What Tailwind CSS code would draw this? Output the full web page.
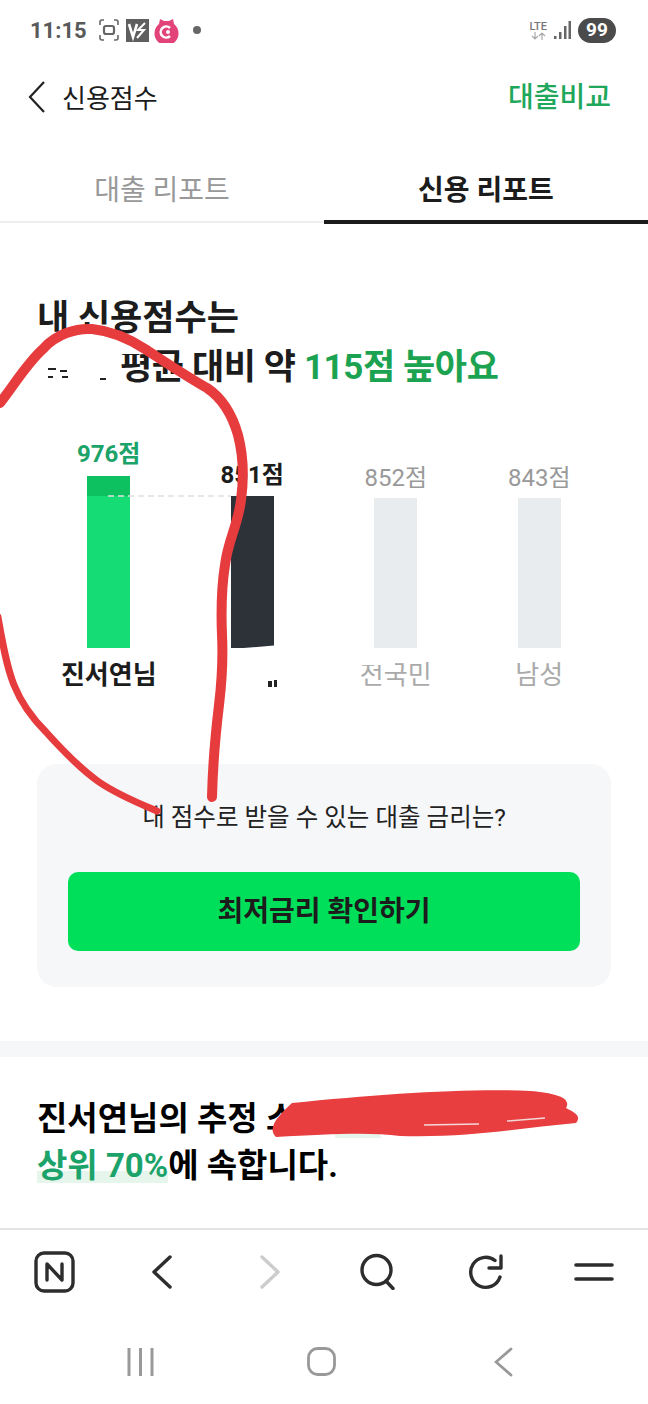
<!DOCTYPE html>
<html lang="ko">
<head>
<meta charset="utf-8">
<script src="https://cdn.jsdelivr.net/npm/@tailwindcss/browser@4"></script>
</head>
<body class="bg-white">
<div class="relative w-[648px] h-[1404px] overflow-hidden bg-white font-['Roboto','Noto_Sans_CJK_KR',sans-serif] text-[#1c1c1c]">

  <!-- status bar -->
  <div class="h-[60px] flex items-center pl-[30px] pr-[32px]">
    <span class="text-[22px] font-bold text-[#5a5a5a] w-[69px]">11:15</span>
    <svg width="20" height="22" viewBox="0 0 20 22" fill="none" stroke="#666" stroke-width="1.6"><path d="M1 6V3q0-2 2-2h2M15 1h2q2 0 2 2v3M1 16v3q0 2 2 2h2M15 21h2q2 0 2-2v-3"/><rect x="5" y="7" width="10" height="8" rx="2" stroke-width="2.2"/></svg>
    <svg class="ml-[7px]" width="23" height="23" viewBox="0 0 23 23"><rect width="23" height="23" fill="#5f5f5f"/><path d="M3 5l4 13 4-13" fill="none" stroke="#fff" stroke-width="2.600"/><path d="M19 4l-7 7h6l-7 8" fill="none" stroke="#fff" stroke-width="2"/></svg>
    <svg class="ml-[5px]" width="25" height="26" viewBox="0 0 25 26"><path d="M6 2l4 2h5l4-2 1 5a12 12 0 1 1-15 0z" fill="#e2447a"/><path d="M16 11a5.500 5.500 0 1 0 0 8" fill="none" stroke="#fff" stroke-width="2.600"/><circle cx="14" cy="15" r="2" fill="#fff"/></svg>
    <span class="ml-[14px] w-[8px] h-[8px] rounded-full bg-[#666]"></span>
    <div class="ml-auto flex items-center">
      <div class="flex flex-col items-center leading-none text-[#777]">
        <span class="text-[11px] font-medium leading-[11px]">LTE</span>
        <svg width="15" height="8" viewBox="0 0 15 8" fill="none" stroke="#aaa" stroke-width="1.2"><path d="M4 0v7M1 4l3 3 3-3M11 8V1M8 4l3-3 3 3"/></svg>
      </div>
      <svg class="ml-[7px]" width="17" height="20" viewBox="0 0 17 20" fill="#666"><rect x="0" y="16" width="2.5" height="3"/><rect x="5" y="12" width="2.5" height="7"/><rect x="10" y="6" width="2.5" height="13"/><rect x="14.5" y="1" width="2.5" height="18"/></svg>
      <span class="ml-[7px] w-[38px] h-[25px] rounded-full bg-[#4b4b4b] text-white text-[19px] font-bold flex items-center justify-center">99</span>
    </div>
  </div>

  <!-- header -->
  <div class="h-[74px] flex items-center pl-[28px] pr-[37px]">
    <svg width="17" height="32" viewBox="0 0 17 32" fill="none" stroke="#222" stroke-width="2.2"><path d="M16 1L2 16l14 15"/></svg>
    <span class="ml-[17px] text-[26px] leading-none pt-[3px]">신용점수</span>
    <span class="ml-auto text-[28px] leading-none font-medium text-[#1fa85c] pt-[1px]">대출비교</span>
  </div>

  <!-- tabs -->
  <div class="h-[90px] grid grid-cols-2">
    <div class="flex items-end justify-center border-b-2 border-[#eeeeee] h-[89px] text-[28px] text-[#999999]"><span class="leading-[36px] mb-[12px]">대출 리포트</span></div>
    <div class="flex items-end justify-center border-b-4 border-[#1c1c1c] text-[28px] font-bold"><span class="leading-[36px] mb-[11px]">신용 리포트</span></div>
  </div>

  <!-- score heading -->
  <div class="pt-[70px] pl-[37px] text-[35px] leading-[49px] font-bold whitespace-nowrap h-[166px]">
    <div>내 신용점수는</div>
    <div class="tracking-[-0.4px]"><span class="inline-block w-[83px]"></span>평균 대비 약 <span class="text-[#1ca352]">115점 높아요</span></div>
  </div>

  <!-- chart -->
  <div class="h-[302px] px-[37px] grid grid-cols-4">
    <div class="flex flex-col items-center justify-end">
      <span class="text-[24px] leading-[32px] font-bold text-[#1ca36a] mb-[6px]">976점</span>
      <div class="w-[43px] h-[172px] bg-[#16dc76] flex flex-col"><div class="h-[20px] bg-[#0ec160]"></div></div>
      <span class="mt-[8px] h-[36px] leading-[38px] text-[26px] font-bold">진서연님</span>
    </div>
    <div class="flex flex-col items-center justify-end">
      <span class="text-[24px] leading-[32px] font-bold mb-[5px]">851점</span>
      <div class="w-[43px] h-[152px] bg-[#2d3239]"></div>
      <span class="mt-[8px] h-[36px]"></span>
    </div>
    <div class="flex flex-col items-center justify-end">
      <span class="text-[24px] leading-[32px] text-[#999999] mb-[4px]">852점</span>
      <div class="w-[43px] h-[150px] bg-[#e9ecef]"></div>
      <span class="mt-[8px] h-[36px] leading-[38px] text-[26px] text-[#aaaaaa]">전국민</span>
    </div>
    <div class="flex flex-col items-center justify-end">
      <span class="text-[24px] leading-[32px] text-[#999999] mb-[4px]">843점</span>
      <div class="w-[43px] h-[150px] bg-[#e9ecef]"></div>
      <span class="mt-[8px] h-[36px] leading-[38px] text-[26px] text-[#aaaaaa]">남성</span>
    </div>
  </div>

  <!-- card -->
  <div class="mt-[72px] mx-[37px] h-[223px] rounded-[20px] bg-[#f6f7f9] px-[31px] pt-[38px]">
    <p class="text-center text-[24.5px] leading-[32px] text-[#222] whitespace-nowrap">내 점수로 받을 수 있는 대출 금리는?</p>
    <div class="mt-[38px] h-[79px] rounded-[10px] bg-[#00df5a] flex items-center justify-center text-[28px] font-bold">최저금리 확인하기</div>
  </div>

  <!-- divider -->
  <div class="mt-[54px] h-[16px] bg-[#f6f7f9]"></div>

  <!-- income heading -->
  <div class="pt-[38px] pl-[37px] text-[33px] leading-[47px] font-bold text-black whitespace-nowrap">
    <div>진서연님의 추정 소</div>
    <div><span class="text-[#1ca36a] bg-[linear-gradient(to_bottom,transparent_65%,#e6f6ec_65%,#e6f6ec_95%,transparent_95%)]">상위 70%</span>에 속합니다.</div>
  </div>

  <!-- browser toolbar -->
  <div class="mt-[39px] h-[87px] border-t-2 border-[#e4e4e4] grid grid-cols-6 items-center justify-items-center pb-[2px]">
    <svg width="41" height="42" viewBox="0 0 41 42" fill="none" stroke="#2d2d2d" stroke-width="3.4" stroke-linecap="round" stroke-linejoin="round"><rect x="2" y="2" width="37" height="38" rx="8"/><path d="M13 29V13l15 16V13"/></svg>
    <svg width="22" height="34" viewBox="0 0 22 34" fill="none" stroke="#2d2d2d" stroke-width="3.4" stroke-linecap="round" stroke-linejoin="round"><path d="M19 2L3 17l16 15"/></svg>
    <svg width="22" height="34" viewBox="0 0 22 34" fill="none" stroke="#cccccc" stroke-width="3.4" stroke-linecap="round" stroke-linejoin="round"><path d="M3 2l16 15L3 32"/></svg>
    <svg width="37" height="37" viewBox="0 0 37 37" fill="none" stroke="#2d2d2d" stroke-width="3.4" stroke-linecap="round"><circle cx="16.5" cy="17" r="14.5"/><path d="M26 28l7 7.5"/></svg>
    <svg width="36" height="36" viewBox="0 0 36 36" fill="none" stroke="#2d2d2d" stroke-width="3.4" stroke-linecap="round" stroke-linejoin="round"><path d="M32 23A15 15 0 1 1 27 6.500"/><path d="M33 2v12H21"/></svg>
    <svg width="40" height="18" viewBox="0 0 40 18" fill="none" stroke="#2d2d2d" stroke-width="3.6" stroke-linecap="round"><path d="M2 2h36M2 16h36"/></svg>
  </div>

  <!-- system nav -->
  <div class="h-[89px] pl-[50px] pr-[54px] pt-[4px] grid grid-cols-3 items-center justify-items-center">
    <svg width="27" height="28" viewBox="0 0 27 28" fill="none" stroke="#999" stroke-width="3"><path d="M2 0v28M13.500 0v28M25 0v28"/></svg>
    <svg width="29" height="29" viewBox="0 0 29 29" fill="none" stroke="#999" stroke-width="2.800"><rect x="1.500" y="1.500" width="26" height="26" rx="9"/></svg>
    <svg width="19" height="30" viewBox="0 0 19 30" fill="none" stroke="#999" stroke-width="2.800" stroke-linecap="round"><path d="M17 2L2 15l15 13"/></svg>
  </div>

  <!-- hand-drawn annotation layer -->
  <svg class="absolute inset-0 pointer-events-none" width="648" height="1404" viewBox="0 0 648 1404" fill="none">
    <path d="M108 496H231" stroke="#e0e0e0" stroke-width="1.500" stroke-dasharray="6 4"/>
    <path d="M231 649L274 645.500V651H231z" fill="#fff"/>
    <rect x="120" y="346" width="26" height="8" fill="#fff"/>
    <path d="M48 369h8M60 371h7M48 377h5M62 377h6M100 379h6" stroke="#222" stroke-width="2"/>
    <rect x="268" y="681" width="4" height="6" fill="#222"/>
    <rect x="274" y="680" width="3" height="7" fill="#222"/>
    <rect x="355" y="655" width="40" height="10" fill="#fff"/>
    <path d="M0 403C14 385 28 362 43 349C56 334 76 328 92 329C112 331 128 338 145 349C165 362 186 376 207 388C222 398 232 414 238 435C244 458 244 478 241 500C238 525 228 540 225 565C221 590 221 610 222 635C223 655 222 680 219 705C216 730 213 755 212 797" stroke="#e63c3e" stroke-width="10" stroke-linecap="round" stroke-linejoin="round"/>
    <path d="M-2 617C2 640 6 665 14 685C22 705 32 718 46 732C64 752 82 770 99 782C118 795 138 803 157 811" stroke="#e63c3e" stroke-width="7" stroke-linecap="round" stroke-linejoin="round"/>
    <rect x="335" y="1128" width="46" height="10" fill="#e6f6ec"/>
    <path d="M292 1103C380 1094 470 1088 530 1091C556 1093 572 1098 566 1108C574 1112 582 1116 576 1123C520 1128 470 1138 400 1136C370 1132 330 1134 276 1137C266 1128 280 1114 292 1103z" fill="#e83e40"/>
    <path d="M424 1125l55-1M507 1121l38-3" stroke="#f3d7d7" stroke-width="1.500"/>
  </svg>
</div>
</body>
</html>
